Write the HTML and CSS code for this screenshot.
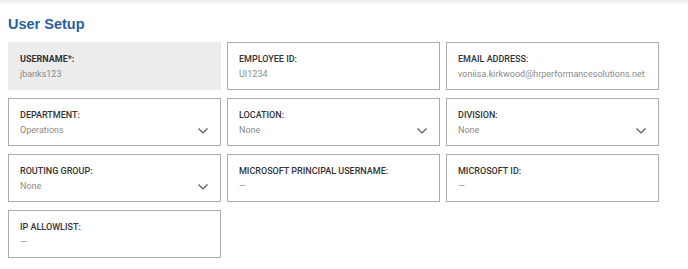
FILE: index.html
```html
<!DOCTYPE html>
<html>
<head>
<meta charset="utf-8">
<link rel="stylesheet" href="styles.css">
</head>
<body>
<div class="topbar"></div>
<main class="page">
  <h1 class="title">User Setup</h1>
  <div class="grid">
    <div class="field field--readonly">
      <div class="label">USERNAME*:</div>
      <div class="value">jbanks123</div>
    </div>
    <div class="field">
      <div class="label">EMPLOYEE ID:</div>
      <div class="value">UI1234</div>
    </div>
    <div class="field">
      <div class="label">EMAIL ADDRESS:</div>
      <div class="value">voniisa.kirkwood@hrperformancesolutions.net</div>
    </div>
    <div class="field field--select">
      <div class="label">DEPARTMENT:</div>
      <div class="value">Operations</div>
      <svg class="chevron" viewBox="0 0 10 6" width="10" height="6"><path d="M0.5 0.5 L5 5 L9.5 0.5" fill="none" stroke="#555" stroke-width="1.2"/></svg>
    </div>
    <div class="field field--select">
      <div class="label">LOCATION:</div>
      <div class="value">None</div>
      <svg class="chevron" viewBox="0 0 10 6" width="10" height="6"><path d="M0.5 0.5 L5 5 L9.5 0.5" fill="none" stroke="#555" stroke-width="1.2"/></svg>
    </div>
    <div class="field field--select">
      <div class="label">DIVISION:</div>
      <div class="value">None</div>
      <svg class="chevron" viewBox="0 0 10 6" width="10" height="6"><path d="M0.5 0.5 L5 5 L9.5 0.5" fill="none" stroke="#555" stroke-width="1.2"/></svg>
    </div>
    <div class="field field--select">
      <div class="label">ROUTING GROUP:</div>
      <div class="value">None</div>
      <svg class="chevron" viewBox="0 0 10 6" width="10" height="6"><path d="M0.5 0.5 L5 5 L9.5 0.5" fill="none" stroke="#555" stroke-width="1.2"/></svg>
    </div>
    <div class="field">
      <div class="label">MICROSOFT PRINCIPAL USERNAME:</div>
      <div class="value">—</div>
    </div>
    <div class="field">
      <div class="label">MICROSOFT ID:</div>
      <div class="value">—</div>
    </div>
    <div class="field">
      <div class="label">IP ALLOWLIST:</div>
      <div class="value">—</div>
    </div>
  </div>
</main>
</body>
</html>
```

FILE: styles.css
```css
* { box-sizing: border-box; }
html, body { margin: 0; padding: 0; background: #fff; }
body { font-family: Roboto, "Liberation Sans", Arial, sans-serif; overflow: hidden; }
.topbar {
  height: 4px;
  background: linear-gradient(#ececec, #fafafa);
}
.page { padding: 11px 8px 0 8px; }
.title {
  margin: 0;
  font-family: "Liberation Sans", Arial, sans-serif;
  font-size: 14.5px;
  font-weight: bold;
  color: #2b5f9f;
  line-height: 18px;
}
.grid {
  margin-top: 9px;
  width: 651px;
  display: grid;
  grid-template-columns: repeat(3, 213px);
  column-gap: 6px;
  row-gap: 8px;
}
.field {
  position: relative;
  height: 48px;
  border: 1px solid #acacac;
  padding: 10px 11px 0 11px;
  background: #fff;
}
.field--readonly {
  background: #ececec;
  border-color: #ececec;
}
.label {
  font-size: 9px;
  font-weight: 500;
  color: #333;
  line-height: 12px;
}
.field--readonly .label { font-weight: 700; }
.value {
  margin-top: 2px;
  font-size: 9px;
  color: #8a8a8a;
  line-height: 14px;
  white-space: nowrap;
}
.chevron {
  position: absolute;
  right: 12px;
  top: 29px;
}
```
